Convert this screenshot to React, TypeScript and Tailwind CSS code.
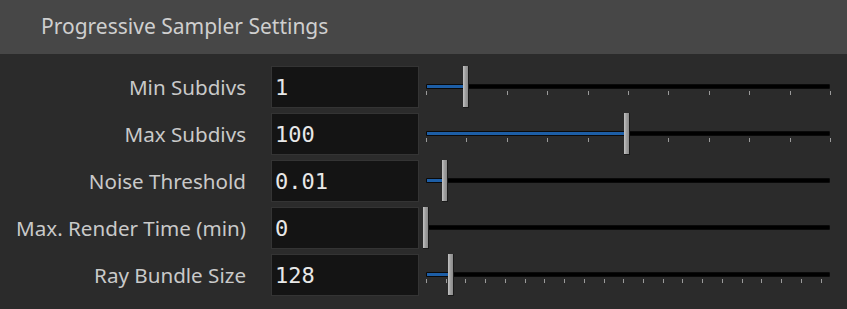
const rows = [
  { label: 'Min Subdivs', value: '1', frac: 0.099, ticks: 11 },
  { label: 'Max Subdivs', value: '100', frac: 0.497, ticks: 11 },
  { label: 'Noise Threshold', value: '0.01', frac: 0.048, ticks: 0 },
  { label: 'Max. Render Time (min)', value: '0', frac: 0, ticks: 0 },
  { label: 'Ray Bundle Size', value: '128', frac: 0.061, ticks: 21 },
];

const TRACK = 404;

function Slider({ frac, ticks }: { frac: number; ticks: number }) {
  const pos = frac * TRACK;
  const tickStep = ticks === 21 ? 19.73 : TRACK / 10;
  return (
    <div className="relative flex-1 h-[42px]">
      <div className="absolute left-[7px] top-[18px] w-[404px] h-[5px] bg-black rounded-[1px] border border-[#0a0a0a]">
        <div className="h-[3px] bg-[#1d5ea6]" style={{ width: pos }} />
      </div>
      {Array.from({ length: ticks }).map((_, i) => (
        <div
          key={i}
          className="absolute top-[25px] w-px h-[4px] bg-[#9a9a9a]"
          style={{ left: 7 + Math.round(i * tickStep) }}
        />
      ))}
      <div
        className="absolute top-0 w-[6px] h-[42px] bg-gradient-to-r from-[#c4c4c4] via-[#9e9e9e] to-[#8a8a8a] border-r border-b border-[#1a1a1a]"
        style={{ left: 4 + pos }}
      />
    </div>
  );
}

export default function App() {
  return (
    <div className="w-[847px] h-[309px] bg-[#2b2b2b] flex flex-col font-['Noto_Sans',sans-serif]">
      <div className="h-[54px] bg-[#474747] flex items-center pl-[41px] text-[21px] text-[#cfcfcf]">
        Progressive Sampler Settings
      </div>
      <div className="flex flex-col gap-[5px] pt-[12px]">
        {rows.map((r) => (
          <div key={r.label} className="flex items-center h-[42px]">
            <div className="w-[246px] text-right text-[20.6px] text-[#c9c9c9] leading-none">{r.label}</div>
            <div className="ml-[25px] w-[148px] h-[42px] bg-[#141414] border border-[#343434] flex items-center pl-[3px] font-['DejaVu_Sans_Mono',monospace] text-[22px] text-[#e8e8e8]">
              {r.value}
            </div>
            <Slider frac={r.frac} ticks={r.ticks} />
          </div>
        ))}
      </div>
    </div>
  );
}
